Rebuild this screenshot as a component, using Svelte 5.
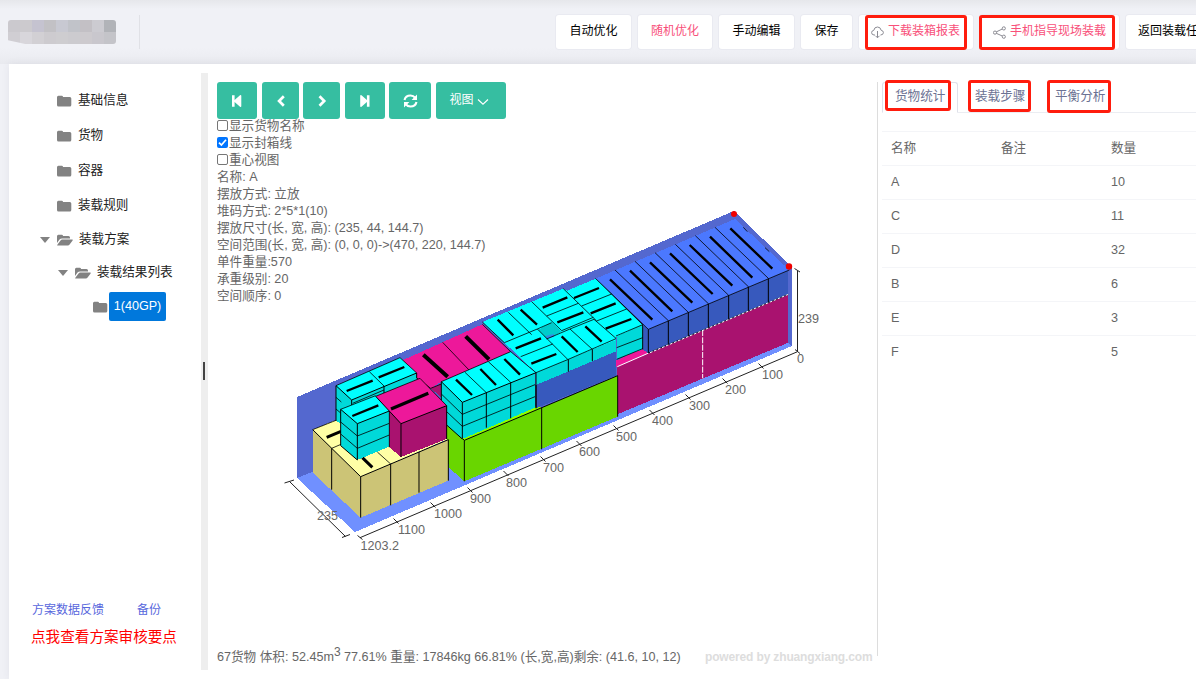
<script>
  const tree = ['基础信息', '货物', '容器', '装载规则'];
  const info = [
    '名称: A', '摆放方式: 立放', '堆码方式: 2*5*1(10)', '摆放尺寸(长, 宽, 高): (235, 44, 144.7)',
    '空间范围(长, 宽, 高): (0, 0, 0)->(470, 220, 144.7)', '单件重量:570', '承重级别: 20', '空间顺序: 0'
  ];
  const checks = [['显示货物名称', false], ['显示封箱线', true], ['重心视图', false]];
  const rows = [['A', 10], ['C', 11], ['D', 32], ['B', 6], ['E', 3], ['F', 5]];
  const labels = [
    ['1203.2', 360.5, 549.5], ['1100', 398, 533.5], ['1000', 434, 517.5], ['900', 470, 502.5], ['800', 506, 486.5],
    ['700', 543, 471.5], ['600', 579, 455.5], ['500', 616, 440.5], ['400', 652, 424.5], ['300', 689, 409.5],
    ['200', 725, 393.5], ['100', 762, 378.5], ['0', 797, 362.5], ['239', 798, 322.5], ['235', 317, 519.5]
  ];
  const ticks = [
    [396, 521], [433, 505], [470, 490], [506, 473.5], [543, 459], [579, 443.5], [616, 428],
    [652, 412.5], [688, 397], [725, 381], [761, 366]
  ];
</script>

{#snippet folder()}
  <svg class="folder" width="15" height="12" viewBox="0 0 15 12"><path d="M0 2.2Q0 .7 1.4.7H4.8Q6 .7 6 2.1H12.8Q14.3 2.1 14.3 3.6V10Q14.3 11.5 12.8 11.5H1.5Q0 11.5 0 10Z" /></svg>
{/snippet}
{#snippet openFolder()}
  <svg class="folder" width="16" height="12" viewBox="0 0 16 12"><path d="M0 9V2.2Q0 .7 1.4.7H4.8Q6 .7 6 2.1H11.5Q13 2.1 13 3.6V4.4H5Q3.5 4.4 2.5 5.6Z" /><path d="M.2 10.9L3.3 6.7Q4.2 5.4 5.4 5.4H15Q16.3 5.4 15.6 6.5L12.8 10.3Q12 11.5 10.7 11.5H.8Q-.1 11.5.2 10.9Z" /></svg>
{/snippet}

<div class="page">
  <header>
    <div class="brand">
      <div class="mosaic">
        {#each ['#cbc9ce', '#cccace', '#c5c3d0', '#c2c1c5', '#c8c9d2', '#c1c3c9', '#c3c0c5', '#cccbd1', '#b1b3b8', '#d0ced3', '#d8d6db', '#d2d0d4', '#cdcbcf', '#cecdd0', '#cccbcf', '#cdcace', '#c9c7cd', '#c4c4c9'] as c}<i style:background={c}></i>{/each}
      </div>
    </div>
    <nav>
      <button class="w75">自动优化</button>
      <button class="w74 pink">随机优化</button>
      <button class="w75">手动编辑</button>
      <button class="w51">保存</button>
      <button class="down pink">
        <svg width="13" height="13" viewBox="0 0 13 13"><path d="M4 9H3Q.6 8.8.6 6.6 .7 4.6 2.8 4.3 3.3 1 6.5 1 9.5 1 10.2 4.3 12.4 4.6 12.4 6.7 12.3 8.9 9.5 9M6.5 5V11.6M4.5 9.8L6.5 11.8 8.5 9.8" /></svg>下载装箱报表<b class="mark m1"></b>
      </button>
      <button class="share pink">
        <svg width="13" height="13" viewBox="0 0 13 13"><path d="M9.3 3L3.3 5.9M3.3 7.3L9.3 10" /><circle cx="10.8" cy="2.4" r="1.6" /><circle cx="2" cy="6.6" r="1.6" /><circle cx="10.8" cy="10.7" r="1.6" /></svg>手机指导现场装载<b class="mark m2"></b>
      </button>
      <button class="back">返回装载任务</button>
    </nav>
  </header>

  <main>
    <aside>
      <ul>
        {#each tree as name}<li>{@render folder()}<span>{name}</span></li>{/each}
        <li class="open"><i class="caret"></i>{@render openFolder()}<span>装载方案</span></li>
        <li class="open sub"><i class="caret"></i>{@render openFolder()}<span>装载结果列表</span></li>
        <li class="leaf">{@render folder()}<span class="sel">1(40GP)</span></li>
      </ul>
      <div class="links"><span>方案数据反馈</span><span>备份</span></div>
      <div class="tips">点我查看方案审核要点</div>
    </aside>
    <div class="split"><i></i></div>

    <section class="stage">
      <div class="controls">
        <div class="tools">
          <button class="t40"><svg width="12" height="14" viewBox="0 0 12 14"><path class="f" d="M1 1.2H3.6V6L9 1.2Q10.3.5 10.3 2V12Q10.3 13.5 9 12.8L3.6 8V12.8H1Z" /></svg></button>
          <button class="t37"><svg width="12" height="14" viewBox="0 0 12 14"><path class="s" d="M8.8 2.3L4.1 7 8.8 11.7" /></svg></button>
          <button class="t37 g4"><svg width="12" height="14" viewBox="0 0 12 14"><path class="s" d="M3.5 2.3L8.2 7 3.5 11.7" /></svg></button>
          <button class="t40"><svg width="12" height="14" viewBox="0 0 12 14"><path class="f" d="M10.5 1.2H7.9V6L2.5 1.2Q1.2.5 1.2 2V12Q1.2 13.5 2.5 12.8L7.9 8V12.8H10.5Z" /></svg></button>
          <button class="t42 g4"><svg width="15" height="14" viewBox="0 0 15 14"><path class="r" d="M1.5 6Q2.5 1.5 7.5 1.5 10.5 1.5 12 3.6M13.5 8Q12.5 12.5 7.5 12.5 4.5 12.5 3 10.4" /><path class="f" d="M14 .5V6H8.6ZM1 13.5V8H6.4Z" /></svg></button>
          <button class="t70">视图<svg width="12" height="8" viewBox="0 0 12 8"><path class="v" d="M1 1.5L6 6.2 11 1.5" /></svg></button>
        </div>
        {#each checks as [name, on]}
          <div class="line check"><i class:on>{#if on}<svg width="11" height="11" viewBox="0 0 11 11"><path d="M2 5.6L4.4 8 9 2.8" /></svg>{/if}</i>{name}</div>
        {/each}
        {#each info as t}<div class="line">{t}</div>{/each}
      </div>

      <svg class="scene" width="660" height="480" viewBox="217 82 660 480">
        <polygon fill="#5468cf" points="297,397 734,211 792,267 792,346 312,472 297,478" />
        <polygon fill="#7090ff" points="297,478 312,472 788,343 792,346 355,532" />

        <g transform="translate(590 200) scale(.33333)">
          <polygon fill="#a9126f" points="82,500 595,283 595,428 82,643" />
          <polygon fill="#ed189a" points="78,482 158,446 176,459 78,501" />
          <path class="w" d="M82 500L176 459" />
          <path class="w seam" d="M338 390V535" />
          <polygon fill="#3759bd" points="158,375 175,388 595,212 595,283 175,459 158,450" />
          <path class="l" d="M175 459L595 283" />
          <path class="dash" d="M180 458L595 283" />
          <polygon fill="#4b78ff" points="17,236 435,57 598,210 175,388" />
          <path class="e" d="M175 388V459M235 362V433M295 337V408M355 311V383M416 286V357M475 260V332M535 235V307" />
          <path class="l" d="M17 236L175 388L598 210M235 362L75 210M295 337L135 184M355 311L195 158M416 286L256 133M475 260L316 107M535 235L375 82M460 82L472 95M525 143L538 155" />
          <path class="k" d="M60 238L187 359M120 212L247 334M180 187L307 308M240 160L368 282M299 135L427 257M360 110L487 233M421 85L547 206" />
        </g>

        <g transform="translate(400 260) scale(.33333)">
          <polygon fill="#69d600" points="140,490 193,541 653,347 653,470 193,664 146,622" />
          <polygon fill="#8dff00" points="140,490 187,532 405,438 425,443 193,541" />
          <path class="e" d="M140 490L193 541L653 347V470M193 541V664M425 443V568" />
          <polygon fill="#3759bd" points="408,374 648,274 648,347 408,445" />
          <path class="e" d="M408 374V445" />
          <polygon fill="#ed189a" points="5,302 247,193 332,275 124,365 92,385 45,350" />
          <polygon fill="#a9126f" points="92,385 124,370 124,412" />
          <path class="l" d="M247 193L332 275M128 247L207 330M92 385L124 372M45 350L92 385" />
          <path class="k t10" d="M70 284L143 350M197 229L267 298" />
          <polygon fill="#00d9d9" points="650,228 728,194 728,268 650,298" />
          <polygon fill="#00d9d9" points="408,338 648,236 648,274 408,375" />
          <polygon fill="#00ffff" points="247,186 490,86 502,92 587,56 728,194 650,230 648,240 408,338 313,248" />
          <polygon fill="#00cccc" points="415,209 455,188 485,215 440,237" />
          <path stroke="#3688e6" stroke-width="8" d="M438 232L462 226" />
          <path class="e" d="M505 298V335M577 268V303M728 194V268" />
          <path class="l" d="M408 338L505 298L648 236M247 186L313 248M325 157L395 224M395 125L485 212M490 86L590 183M440 168L535 130M313 248L412 207L455 188M545 138L635 102M590 183L680 147M587 56L728 194L648 228M485 212L580 172M412 207L503 298M362 290L458 252M440 237L510 207L577 268M510 207L582 178L648 235M650 263L728 233M650 298L728 266" />
          <path class="k" d="M293 179L340 226M362 149L411 194M428 143L502 112M472 187L550 157M522 114L597 84M572 160L647 130M617 206L694 177M347 265L423 235M394 311L469 282M485 229L533 276M556 199L605 245" />
          <polygon fill="#00d9d9" points="124,365 187,427 405,338 405,443 187,537 140,495 124,478" />
          <polygon fill="#00ffff" points="124,365 332,275 408,338 187,427" />
          <path class="e" d="M124 480V365L187 427L408 338V443M187 427V537M259 398V503M332 367V475M187 537L140 495" />
          <path class="l" d="M124 365L332 275L408 338M195 337L259 398M265 305L332 367M124 402L187 463L405 374M140 455L187 499L405 410" />
          <path class="k" d="M168 359L216 405M241 327L288 375M313 297L360 344" />
        </g>

        <g transform="translate(280 340) scale(.33333)">
          <polygon fill="#ccc476" points="98,269 242,410 505,299 505,422 242,533 98,398" />
          <polygon fill="#ffffa6" points="98,269 168,240 330,300 480,297 505,297 242,410" />
          <path class="e" d="M98 269L242 410L505 299V422M242 410V533M332 372V496M417 336V458M155 325V449" />
          <path class="l" d="M98 269L168 241M155 325L183 313M292 336L332 372" />
          <path class="k t7" d="M140 292L183 274M247 353L277 382" />
          <polygon fill="#00d9d9" points="168,137 215,180 410,99 410,118 300,172 182,215 182,250 168,243" />
          <polygon fill="#00ffff" points="168,137 360,53 410,99 215,180" />
          <path class="e" d="M168 243V137L215 180L410 99V115M215 180V198M312 138V162" />
          <path class="l" d="M168 137L360 53L410 99M268 95L312 138M168 172L184 186M168 207L182 219M218 190L312 150" />
          <path class="k" d="M200 153L278 122M296 112L373 81" />
          <polygon fill="#00d9d9" points="182,208 232,251 328,213 328,320 232,360 182,317" />
          <polygon fill="#00ffff" points="182,208 287,167 328,213 232,251" />
          <path class="e" d="M182 317V208L232 251L328 213M232 251V360L182 317" />
          <path class="l" d="M182 208L287 167M182 246L232 288L328 250M182 282L232 325L328 285" />
          <path class="k" d="M217 228L295 196" />
          <polygon fill="#a9126f" points="328,210 363,251 500,197 500,297 363,351 328,322" />
          <polygon fill="#ed189a" points="287,169 420,115 500,197 363,251" />
          <path class="e" d="M363 351V251L500 197V297M287 169L363 251" />
          <path class="l" d="M287 169L420 115L500 197M328 213V322" />
          <path class="k t9" d="M333 207L445 160" />
        </g>

        <g class="axis">
          <path d="M289.5 481.5L345.5 536.5M284.5 483L294 480M342 537.5L350 534.5M360 537.7L797.5 351.7M797.5 271V352M794.5 268.5L800 272M795 349.5L800 353.5M357.5 535.5L362.5 539.5" />
          {#each ticks as [x, y]}<path d="M{x - 2.5} {y - 2.5}L{x + 2.5} {y + 2.5}" />{/each}
          {#each labels as [t, x, y]}<text {x} {y}>{t}</text>{/each}
        </g>
        <circle cx="734" cy="214" r="3" fill="#f00000" /><circle cx="789" cy="266.5" r="3.2" fill="#f00000" />
      </svg>

      <footer><span>67货物 体积: 52.45m<sup>3</sup> 77.61% 重量: 17846kg 66.81% (长,宽,高)剩余: (41.6, 10, 12)</span><em>powered by zhuangxiang.com</em></footer>
    </section>

    <section class="panel">
      <div class="tabs">
        <div class="tab active">货物统计<b class="mark m3"></b></div>
        <div class="tab">装载步骤<b class="mark m4"></b></div>
        <div class="tab">平衡分析<b class="mark m5"></b></div>
      </div>
      <div class="table">
        <div class="row"><span>名称</span><span>备注</span><span>数量</span></div>
        {#each rows as [n, q]}<div class="row"><span>{n}</span><span></span><span>{q}</span></div>{/each}
      </div>
    </section>
  </main>
</div>

<style>
  :global(body) { margin: 0; overflow: hidden; }
  .page {
    width: 1196px; height: 679px; overflow: hidden; display: flex; flex-direction: column;
    background: #f0f1f6; color: #666; font: 400 12.6px/17px "Liberation Sans", "Noto Sans CJK SC", sans-serif;
  }
  button { font: inherit; border: 0; padding: 0; margin: 0; display: flex; align-items: center; justify-content: center; flex: none; white-space: nowrap; }
  header {
    height: 64px; flex: none; display: flex; box-sizing: border-box; padding: 15px 0 0 8px;
    background: linear-gradient(#e6e7eb 0, #f0f1f6 9px, #f0f1f6 48px, #e9eaef 64px);
  }
  .brand { width: 131px; height: 34px; border-right: 1px solid #e0e1e6; box-sizing: content-box; flex: none; }
  .mosaic { width: 108px; height: 24px; margin-top: 5px; display: grid; grid-template-columns: repeat(9, 12px); grid-auto-rows: 12px; border-radius: 3px; overflow: hidden; clip-path: polygon(0 0, 100% 0, 100% 100%, 16% 100%, 0 84%); }
  nav { display: flex; margin-left: 416px; }
  nav button { height: 34px; background: #fff; color: #000; font-size: 12px; border-radius: 3px; margin-right: 7px; position: relative; box-shadow: 0 0 0 1px #e9eaf1; box-sizing: border-box; padding-bottom: 1px; }
  nav button.pink { color: #f8507a; }
  nav svg { fill: none; stroke: #8b8b93; stroke-width: 1; margin-right: 4px; position: relative; top: 1px; }
  .w75 { width: 75px; } .w74 { width: 74px; } .w51 { width: 51px; }
  nav .down { width: 114px; justify-content: flex-start; padding-left: 12px; }
  nav .share { width: 139px; justify-content: flex-start; padding-left: 13px; }
  nav .back { width: 100px; justify-content: flex-start; padding-left: 12px; }
  .mark { position: absolute; box-sizing: border-box; border: 3px solid #ff1c0d; border-radius: 3px; }
  .m1 { left: 6px; top: 0; width: 102px; height: 35px; }
  .m2 { left: -1px; top: 0; width: 136px; height: 35px; }

  main { flex: 1; margin-left: 9px; background: #fff; box-shadow: 0 0 8px rgba(60, 60, 80, .07); display: flex; box-sizing: border-box; padding-top: 9px; min-height: 0; }
  aside { width: 192px; flex: none; color: #222; display: flex; flex-direction: column; }
  ul { list-style: none; margin: 10px 0 0; padding: 0; }
  li { display: flex; align-items: center; height: 35px; padding-left: 48px; box-sizing: border-box; white-space: nowrap; }
  li span { margin-left: 6px; }
  .folder { fill: #828282; flex: none; }
  li.open { padding-left: 31px; height: 33px; }
  li.sub { padding-left: 49px; }
  .caret { width: 0; height: 0; border: 5px solid transparent; border-top: 6px solid #828282; border-bottom: 0; margin-right: 7px; flex: none; }
  li.leaf { padding-left: 84px; }
  li .sel { background: #0078dc; color: #fff; height: 29px; line-height: 28px; width: 57px; text-align: center; border-radius: 2px; margin-left: 1px; }
  .links { margin-top: 278px; padding-left: 23px; display: flex; gap: 33px; font-size: 12px; color: #5867dd; }
  .tips { margin: 10px 0 0 22px; font-size: 14.6px; color: #f00; }
  .split { width: 7px; height: 597px; background: #eee; flex: none; display: flex; align-items: center; justify-content: center; }
  .split i { width: 2px; height: 18px; background: #444; margin: -2px 2px 0 0; }

  .stage { width: 660px; flex: none; margin: 9px 0 0 9px; height: 574px; border-right: 1px solid #ddd; display: grid; grid-template: 1fr 20px / 660px; }
  .controls, .scene { grid-area: 1 / 1; }
  .controls { z-index: 1; }
  .tools { display: flex; height: 36px; gap: 5px; }
  .tools button { height: 37px; background: #36bea1; color: #fff; border-radius: 3px; }
  .tools .g4 { margin-left: -1px; }
  .t40 { width: 40px; } .t37 { width: 37px; } .t42 { width: 42px; } .t70 { width: 70px; }
  .tools .t70 { font-size: 12px; padding: 0 4px 0 0; box-sizing: border-box; gap: 3px; }
  .t70 svg { position: relative; top: 1px; }
  .f { fill: #fff; }
  .tools .f { fill: #fff; }
  .s { fill: none; stroke: #fff; stroke-width: 2.7; }
  .r { fill: none; stroke: #fff; stroke-width: 2.1; }
  .v { fill: none; stroke: #fff; stroke-width: 1.2; }
  .line { height: 17px; line-height: 17.5px; white-space: nowrap; }
  .check { display: flex; align-items: center; }
  .check i { width: 11px; height: 11px; box-sizing: border-box; border: 1px solid #767676; border-radius: 2px; margin: -2px 1px 0 0; display: flex; flex: none; }
  .check i.on { background: #0075ff; border: 0; }
  .check path { fill: none; stroke: #fff; stroke-width: 1.7; }
  .scene { display: block; }
  .scene polygon { shape-rendering: crispEdges; }
  .scene path { fill: none; }
  .e { stroke: #000; stroke-width: 3; }
  .l { stroke: #000; stroke-width: 2.4; }
  .k { stroke: #000; stroke-width: 7; }
  .t7 { stroke-width: 9; } .t9 { stroke-width: 10; } .t10 { stroke-width: 12; }
  .w { stroke: #fff; stroke-width: 3; }
  .seam { stroke-dasharray: 18 4; }
  .dash { stroke: #fff; stroke-width: 3; stroke-dasharray: 8 5; }
  .axis path { stroke: #222; stroke-width: 1; }
  .axis text { fill: #666; font-size: 12.6px; }
  footer { grid-area: 2 / 1; display: flex; white-space: nowrap; align-items: flex-end; line-height: 18px; height: 20px; margin-top: 10px; align-self: start; }
  footer span { width: 488px; flex: none; }
  sup { font-size: 12px; line-height: 0; vertical-align: 5px; }
  em { font-style: normal; color: #ddd; font-weight: bold; font-size: 12px; letter-spacing: -.15px; }

  .panel { flex: 1; min-width: 0; margin: 9px 0 0 4px; }
  .tabs { display: flex; border-bottom: 1px solid #ebedf2; height: 31px; box-sizing: border-box; }
  .tab { position: relative; box-sizing: border-box; height: 31px; padding: 6px 0 0 13px; width: 80px; color: #6c7293; white-space: nowrap; }
  .tab.active { width: 76px; margin-right: 4px; border: 1px solid #dfe1ea; border-bottom: 1px solid #fff; border-radius: 3px 3px 0 0; padding: 5px 0 0 12px; }
  .m3 { left: 2px; top: -3px; width: 66px; height: 31px; }
  .m4 { left: 6px; top: -2px; width: 63px; height: 32px; }
  .m5 { left: 5px; top: -2px; width: 64px; height: 33px; }
  .table { margin-top: 18px; border-top: 1px solid #f4f5f8; }
  .row { display: grid; grid-template-columns: 110px 110px 110px; height: 34px; box-sizing: border-box; border-bottom: 1px solid #f4f5f8; line-height: 32px; padding-left: 9px; }
  .row:last-child { border-bottom: 0; }
</style>
